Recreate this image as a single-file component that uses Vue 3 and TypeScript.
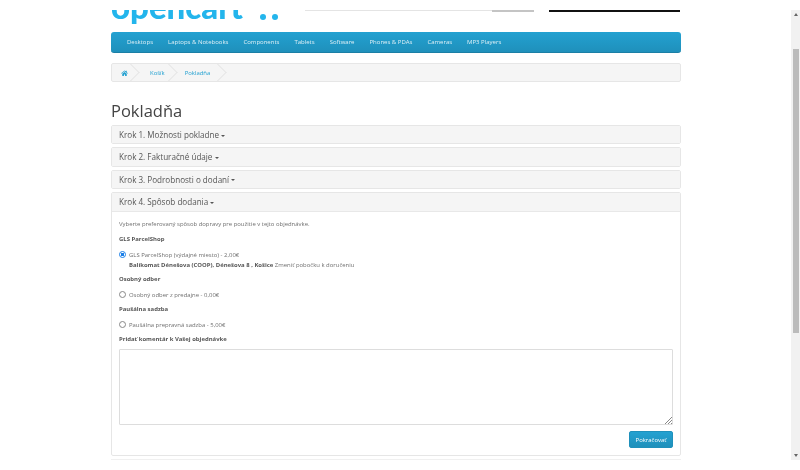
<script setup lang="ts">
const steps = ['Krok 1. Možnosti pokladne', 'Krok 2. Fakturačné údaje', 'Krok 3. Podrobnosti o dodaní']
const menu = ['Desktops', 'Laptops & Notebooks', 'Components', 'Tablets', 'Software', 'Phones & PDAs', 'Cameras', 'MP3 Players']
</script>

<template>
  <div class="viewport">
    <div class="page">
      <div class="container">
        <header class="header">
          <div class="logo-wrap">
            <span class="logo">opencart</span>
            <span class="logo-dots"><i></i><i></i></span>
          </div>
          <div class="search"><div class="search-line"></div><div class="search-btn"></div></div>
          <div class="cart"></div>
        </header>
        <nav class="menu">
          <a v-for="m in menu" :key="m">{{ m }}</a>
        </nav>
        <ul class="crumb">
          <li class="home">
            <svg width="7" height="6" viewBox="0 0 18 16"><path fill="#23a1d1" d="M9 1 0 8.600l1 1.200L9 3.200l8 6.600 1-1.200-3-2.500V2h-2.500v1.200zM3 10.200V16h4.500v-4h3v4H15v-5.800L9 5.200z"/></svg>
          </li>
          <li><a>Košík</a></li>
          <li class="last"><a>Pokladňa</a></li>
        </ul>
        <h1 class="title">Pokladňa</h1>
        <div v-for="s in steps" :key="s" class="panel">
          <div class="panel-head">{{ s }} <span class="caret"></span></div>
        </div>
        <div class="panel open">
          <div class="panel-head">Krok 4. Spôsob dodania <span class="caret"></span></div>
          <div class="panel-body">
            <p class="intro">Vyberte preferovaný spôsob dopravy pre použitie v tejto objednávke.</p>
            <p class="group">GLS ParcelShop</p>
            <div class="radio">
              <span class="dot on"></span>
              <div>
                <div>GLS ParcelShop (výdajné miesto) - 2,00€</div>
                <div><b>Balíkomat Dénešova (COOP), Dénešova 8 , Košice</b> Zmeniť pobočku k doručeniu</div>
              </div>
            </div>
            <p class="group">Osobný odber</p>
            <div class="radio"><span class="dot"></span><div>Osobný odber z predajne - 0,00€</div></div>
            <p class="group">Paušálna sadzba</p>
            <div class="radio"><span class="dot"></span><div>Paušálna prepravná sadzba - 5,00€</div></div>
            <p class="group">Pridať komentár k Vašej objednávke</p>
            <div class="textarea">
              <svg class="grip" width="7" height="7" viewBox="0 0 7 7"><path d="M0 7 7 0M3 7l4-4M6 7l1-1" stroke="#888" stroke-width="1"/></svg>
            </div>
            <div class="actions"><button class="btn">Pokračovať</button></div>
          </div>
        </div>
        <div class="panel-next"></div>
      </div>
    </div>
    <div class="scrollbar">
      <span class="arrow up"></span>
      <div class="thumb"></div>
      <span class="arrow down"></span>
    </div>
  </div>
</template>

<style>
html, body { margin: 0; background: #fff; overflow: hidden; }
</style>

<style scoped>
.viewport { width: 800px; height: 470px; padding: 10px 0; box-sizing: border-box; display: flex; font-family: "Open Sans", sans-serif; font-size: 5.950px; color: #707070; }
.page { flex: 1; height: 450px; overflow: hidden; filter: blur(.3px); }
.container { width: 570px; margin-left: 111px; }
.header { height: 22px; display: flex; position: relative; }
.logo-wrap { width: 194px; height: 18px; overflow: hidden; position: relative; flex: none; }
.logo { display: block; margin-top: -24px; font: 900 33px/40px Lato, sans-serif; color: #23b5ec; }
.logo-dots { position: absolute; left: 149px; top: 4px; display: flex; gap: 6px; }
.logo-dots i { width: 6px; height: 6px; border-radius: 50%; background: #23b5ec; display: block; }
.search { width: 229px; height: 2px; display: flex; flex: none; }
.search-line { flex: 1; background: #e4e4e4; height: 1px; }
.search-btn { width: 42px; height: 2px; background: #c4c4c4; }
.cart { width: 131px; height: 2px; background: #111; margin-left: 15px; flex: none; }
.menu { height: 21px; box-sizing: border-box; background: linear-gradient(#23a1d1, #1f90bb); border-bottom: 1px solid #1b7fa5; border-radius: 3px; display: flex; align-items: center; padding-left: 16px; gap: 15px; }
.menu a { color: #fff; opacity: .85; font-size: 6px; }
.crumb { list-style: none; margin: 10px 0 0; padding: 0; height: 19px; box-sizing: border-box; background: #f5f5f5; border: 1px solid #e6e6e6; border-radius: 2px; display: flex; align-items: center; overflow: hidden; }
.crumb li { position: relative; height: 17px; display: flex; align-items: center; padding: 0 13px 0 10px; }
.crumb li.home { padding: 0 12px 0 9px; }
.crumb li.last { padding: 0 16px 0 7px; }
.crumb li::after { content: ""; position: absolute; right: 2.700px; top: 2px; width: 12px; height: 12px; border-top: 1px solid #e6e6e6; border-right: 1px solid #e6e6e6; transform: rotate(45deg); }
.crumb a { color: #23a1d1; font-size: 5.950px; }
.title { margin: 17px 0 0; font: 400 16.500px/24px "Open Sans", sans-serif; color: #444; height: 24px; }
.panel { margin-top: 3px; border: 1px solid #e6e6e6; border-radius: 2px; background: #fff; box-sizing: border-box; }
.title + .panel { margin-top: 2px; }
.panel-head { height: 17.300px; background: #f5f5f5; font-size: 8.100px; line-height: 17.300px; padding-left: 7px; color: #555; }
.panel.open .panel-head { height: 19px; line-height: 18px; border-bottom: 1px solid #e8e8e8; box-sizing: border-box; }
.caret { display: inline-block; width: 0; height: 0; border-top: 2.500px solid #555; border-left: 2.500px solid transparent; border-right: 2.500px solid transparent; vertical-align: middle; }
.panel-body { padding: 8px 7px 7px; box-sizing: border-box; }
p { margin: 0; }
.intro { height: 9px; line-height: 9px; }
.group { font-weight: 700; line-height: 9px; height: 9px; color: #555; }
.intro + .group { margin-top: 6.500px; }
.radio { display: flex; gap: 3px; line-height: 10px; margin: 5.500px 0; }
.radio b { color: #555; }
.dot { width: 5px; height: 5px; border: 1px solid #888; border-radius: 50%; margin-top: 1.500px; flex: none; background: #fff; }
.dot.on { border-color: #1a7fe8; background: radial-gradient(circle, #1a7fe8 1.500px, #fff 2px); }
.textarea { margin-top: 5px; height: 76px; box-sizing: border-box; border: 1px solid #ddd; border-radius: 1px; position: relative; }
.grip { position: absolute; right: 0; bottom: 0; }
.actions { display: flex; justify-content: flex-end; margin-top: 6px; }
.btn { width: 44px; height: 17px; background: linear-gradient(#23a1d1, #1f90bb); border: 1px solid #1f90bb; border-radius: 2px; color: #fff; font: 5.950px "Open Sans", sans-serif; padding: 0; }
.panel-next { height: 2px; margin-top: 3px; background: #f0f0f0; }
.scrollbar { width: 9px; height: 450px; background: #f1f1f1; position: relative; flex: none; }
.arrow { position: absolute; left: 2.500px; width: 0; height: 0; border-left: 2px solid transparent; border-right: 2px solid transparent; }
.arrow.up { top: 3px; border-bottom: 3px solid #666; }
.arrow.down { bottom: 3px; border-top: 3px solid #666; }
.thumb { position: absolute; top: 39px; left: 1.500px; width: 6.500px; height: 284px; background: #bbb; }
</style>
